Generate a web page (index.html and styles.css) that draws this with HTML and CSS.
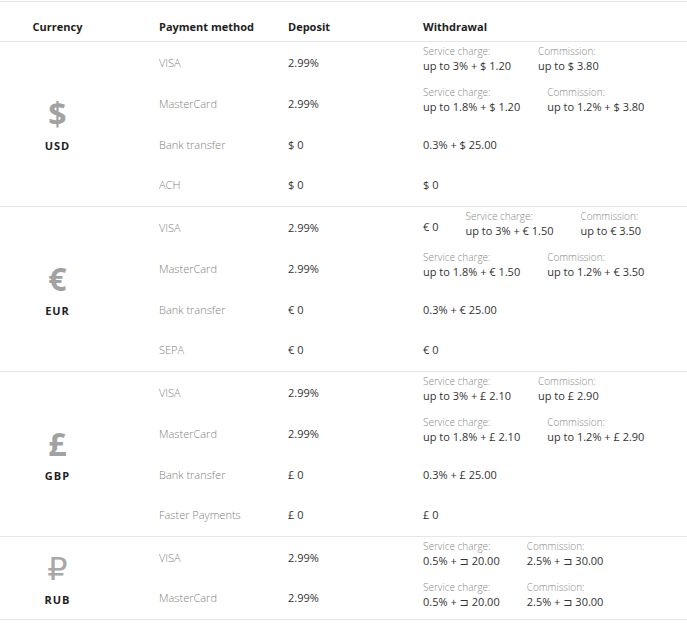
FILE: index.html
```html
<!DOCTYPE html>
<html>
<head>
<meta charset="utf-8">
<link rel="stylesheet" href="styles.css">
</head>
<body>
<table class="fees">
  <colgroup>
    <col class="c1"><col class="c2"><col class="c3"><col class="c4">
  </colgroup>
  <thead>
    <tr>
      <th class="cur-h">Currency</th>
      <th>Payment method</th>
      <th>Deposit</th>
      <th>Withdrawal</th>
    </tr>
  </thead>
  <tbody class="group">
    <tr>
      <td class="cur" rowspan="4"><div class="sym">$</div><div class="code">USD</div></td>
      <td class="pm">VISA</td><td class="dep">2.99%</td>
      <td class="wd"><div class="pair"><div><div class="lbl">Service charge:</div><div class="val">up to 3% + $ 1.20</div></div><div><div class="lbl">Commission:</div><div class="val">up to $ 3.80</div></div></div></td>
    </tr>
    <tr>
      <td class="pm">MasterCard</td><td class="dep">2.99%</td>
      <td class="wd"><div class="pair"><div><div class="lbl">Service charge:</div><div class="val">up to 1.8% + $ 1.20</div></div><div><div class="lbl">Commission:</div><div class="val">up to 1.2% + $ 3.80</div></div></div></td>
    </tr>
    <tr><td class="pm">Bank transfer</td><td class="dep">$ 0</td><td class="wd">0.3% + $ 25.00</td></tr>
    <tr class="last"><td class="pm">ACH</td><td class="dep">$ 0</td><td class="wd">$ 0</td></tr>
  </tbody>
  <tbody class="group">
    <tr>
      <td class="cur" rowspan="4"><div class="sym">€</div><div class="code">EUR</div></td>
      <td class="pm">VISA</td><td class="dep">2.99%</td>
      <td class="wd"><div class="pair"><div class="single">€ 0</div><div><div class="lbl">Service charge:</div><div class="val">up to 3% + € 1.50</div></div><div><div class="lbl">Commission:</div><div class="val">up to € 3.50</div></div></div></td>
    </tr>
    <tr>
      <td class="pm">MasterCard</td><td class="dep">2.99%</td>
      <td class="wd"><div class="pair"><div><div class="lbl">Service charge:</div><div class="val">up to 1.8% + € 1.50</div></div><div><div class="lbl">Commission:</div><div class="val">up to 1.2% + € 3.50</div></div></div></td>
    </tr>
    <tr><td class="pm">Bank transfer</td><td class="dep">€ 0</td><td class="wd">0.3% + € 25.00</td></tr>
    <tr class="last"><td class="pm">SEPA</td><td class="dep">€ 0</td><td class="wd">€ 0</td></tr>
  </tbody>
  <tbody class="group">
    <tr>
      <td class="cur" rowspan="4"><div class="sym">£</div><div class="code">GBP</div></td>
      <td class="pm">VISA</td><td class="dep">2.99%</td>
      <td class="wd"><div class="pair"><div><div class="lbl">Service charge:</div><div class="val">up to 3% + £ 2.10</div></div><div><div class="lbl">Commission:</div><div class="val">up to £ 2.90</div></div></div></td>
    </tr>
    <tr>
      <td class="pm">MasterCard</td><td class="dep">2.99%</td>
      <td class="wd"><div class="pair"><div><div class="lbl">Service charge:</div><div class="val">up to 1.8% + £ 2.10</div></div><div><div class="lbl">Commission:</div><div class="val">up to 1.2% + £ 2.90</div></div></div></td>
    </tr>
    <tr><td class="pm">Bank transfer</td><td class="dep">£ 0</td><td class="wd">0.3% + £ 25.00</td></tr>
    <tr class="last"><td class="pm">Faster Payments</td><td class="dep">£ 0</td><td class="wd">£ 0</td></tr>
  </tbody>
  <tbody class="group">
    <tr>
      <td class="cur" rowspan="2"><div class="sym rub">₽</div><div class="code">RUB</div></td>
      <td class="pm">VISA</td><td class="dep">2.99%</td>
      <td class="wd"><div class="pair"><div><div class="lbl">Service charge:</div><div class="val">0.5% + ⊐ 20.00</div></div><div><div class="lbl">Commission:</div><div class="val">2.5% + ⊐ 30.00</div></div></div></td>
    </tr>
    <tr class="last">
      <td class="pm">MasterCard</td><td class="dep">2.99%</td>
      <td class="wd"><div class="pair"><div><div class="lbl">Service charge:</div><div class="val">0.5% + ⊐ 20.00</div></div><div><div class="lbl">Commission:</div><div class="val">2.5% + ⊐ 30.00</div></div></div></td>
    </tr>
  </tbody>
</table>
</body>
</html>
```

FILE: styles.css
```css
html, body {
  margin: 0;
  padding: 0;
  background: #fff;
}
body {
  padding-top: 1px;
  font-family: "Open Sans", "DejaVu Sans", sans-serif;
  font-size: 11px;
  color: #333;
}
.fees {
  width: 687px;
  border-collapse: collapse;
  table-layout: fixed;
  border-top: 1px solid #e6e6e6;
}
.c1 { width: 115px; }
.c2 { width: 129px; }
.c3 { width: 135px; }
.c4 { width: 308px; }

.fees th {
  height: 40px;
  box-sizing: border-box;
  padding: 0 0 7px 44px;
  vertical-align: bottom;
  text-align: left;
  font-weight: 700;
  font-size: 11px;
  line-height: 15px;
  color: #222;
  white-space: nowrap;
  border-bottom: 1px solid #e6e6e6;
}
.fees th.cur-h {
  padding-left: 0;
  text-align: center;
}
.fees td {
  height: 41px;
  box-sizing: border-box;
  padding: 0 0 0 44px;
  vertical-align: middle;
  line-height: 15px;
  white-space: nowrap;
}
.fees tr.last td {
  height: 42px;
  padding-bottom: 1px;
}
.fees tr.last td, .fees td.cur {
  border-bottom: 1px solid #e6e6e6;
}
.fees td.cur {
  padding: 4px 0 0;
  text-align: center;
}
.sym {
  font-size: 32px;
  font-weight: 700;
  line-height: 30px;
  color: #a2a2a2;
}
.sym.rub {
  font-weight: 400;
  color: #a8a8a8;
}
.code {
  margin-top: 10px;
  font-size: 11px;
  font-weight: 700;
  letter-spacing: 1px;
  line-height: 14px;
  color: #1e1e1e;
}
.pm {
  color: #808080;
  font-weight: 300;
}
.dep {
  color: #333;
}
.wd {
  color: #333;
}
.pair {
  display: flex;
  gap: 27px;
  align-items: center;
  margin-top: -5px;
}
.lbl {
  font-size: 10px;
  line-height: 13px;
  color: #888;
  font-weight: 300;
}
.val {
  font-size: 11px;
  line-height: 16px;
  color: #333;
}
.single {
  margin-top: 4px;
}
```
